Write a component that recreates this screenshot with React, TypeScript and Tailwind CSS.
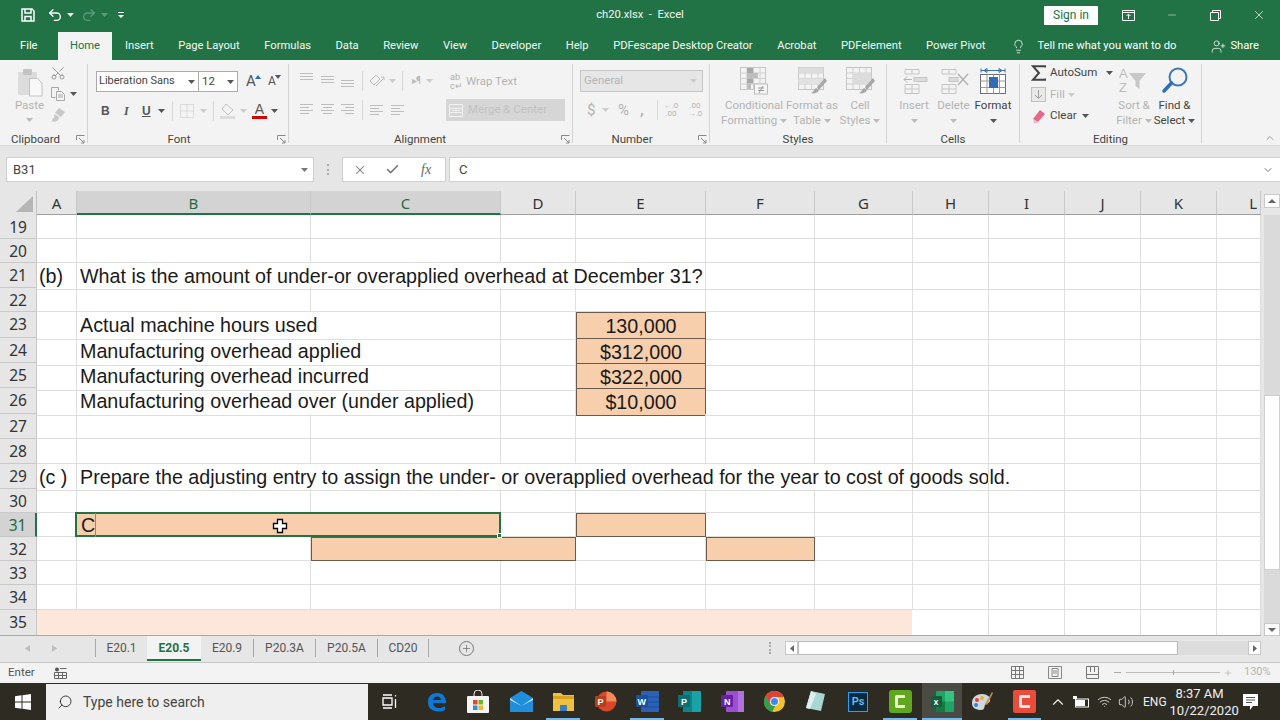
import React from 'react';
import {
  Scissors, Undo2, Redo2, Lightbulb, UserPlus, X, Check, Minus, Plus, Search,
  ChevronDown, ChevronUp, Wifi, Volume2,
} from 'lucide-react';

const ui = "font-['Roboto','Noto_Sans',sans-serif]";

function Caret({ c = '#555', className = '' }: { c?: string; className?: string }) {
  return (
    <svg width="7" height="4" viewBox="0 0 7 4" className={className}>
      <path d="M0 0h7L3.500 4z" fill={c} />
    </svg>
  );
}

function Launcher() {
  return (
    <svg width="9" height="9" viewBox="0 0 9 9" fill="none" stroke="#8a8a8a" strokeWidth="1">
      <path d="M.5 5V.5H8.500M3 3l5 5M8 5v3H5" />
    </svg>
  );
}

function Divider({ h = 'h-[24px]' }: { h?: string }) {
  return <div className={`w-px ${h} bg-[#d8d8d8]`} />;
}

function Lines({ kind }: { kind: 'l' | 'c' | 'r' | 't' | 'm' | 'b' }) {
  const rows: Record<string, number[][]> = {
    l: [[1, 14], [1, 10], [1, 14], [1, 10]],
    c: [[1, 14], [3, 12], [1, 14], [3, 12]],
    r: [[1, 14], [5, 14], [1, 14], [5, 14]],
    t: [[1, 14], [1, 14], [1, 14]],
    m: [[1, 14], [1, 14], [1, 14]],
    b: [[1, 14], [1, 14], [1, 14]],
  };
  const offs: Record<string, number> = { l: 2, c: 2, r: 2, t: 1, m: 4, b: 8 };
  return (
    <svg width="15" height="15" viewBox="0 0 15 15" stroke="#bdbdbd" strokeWidth="1">
      {rows[kind].map((r, i) => (
        <line key={i} x1={r[0]} x2={r[1]} y1={offs[kind] + i * 3 + 0.5} y2={offs[kind] + i * 3 + 0.5} />
      ))}
    </svg>
  );
}

function BigTableIcon({ kind }: { kind: 'cond' | 'table' | 'cell' }) {
  return (
    <svg width="30" height="28" viewBox="0 0 30 28" fill="none">
      <rect x="1.500" y=".5" width="25" height="22" fill="#f3f3f3" stroke="#c6c6c6" />
      <path d="M1.500 6h25M1.500 11.500h25M1.500 17h25M8 .5v22M14.500 .5v22M21 .5v22" stroke="#cfcfcf" />
      {kind === 'cond' && (
        <>
          <rect x="8" y="1" width="6" height="5" fill="#a8a8a8" />
          <rect x="8" y="6" width="11" height="5" fill="#bdbdbd" />
          <rect x="8" y="11.500" width="6" height="5" fill="#a8a8a8" />
          <rect x="8" y="17" width="4" height="5" fill="#bdbdbd" />
          <rect x="15.500" y="17" width="13" height="10" fill="#f7f7f7" stroke="#bdbdbd" />
          <path d="M19 21h6M19 23.500h6M24 19l-4 7" stroke="#9a9a9a" />
        </>
      )}
      {kind === 'table' && (
        <>
          <rect x="1.500" y=".5" width="25" height="5.500" fill="#dcdcdc" />
          <rect x="1.500" y="11.500" width="25" height="5.500" fill="#e2e2e2" />
          <path d="M28 11l-8 9 2 3 8-9zM19 21c-2 1-2 4-5 5 3 1 7 0 8-3z" fill="#a8a8a8" />
        </>
      )}
      {kind === 'cell' && (
        <>
          <rect x="8" y="6" width="18" height="11" fill="#dcdcdc" />
          <path d="M28 11l-8 9 2 3 8-9zM19 21c-2 1-2 4-5 5 3 1 7 0 8-3z" fill="#a8a8a8" />
        </>
      )}
    </svg>
  );
}

function BigCmd({ icon, l1, l2, w, caret, dark }: { icon: React.ReactNode; l1: string; l2?: string; w: string; caret?: boolean; dark?: boolean }) {
  const col = dark ? 'text-[#444]' : 'text-[#b4b4b4]';
  return (
    <div className={`${w} shrink-0 flex flex-col items-center`}>
      <div className="h-[28px] flex items-start justify-center">{icon}</div>
      <div className={`mt-[3px] text-[11.500px] leading-[15px] whitespace-nowrap ${col}`}>{l1}</div>
      {l2 ? (
        <div className={`text-[11.500px] leading-[15px] whitespace-nowrap flex items-center gap-[3px] ${col}`}>
          {l2}
          <Caret c={dark ? '#555' : '#bbb'} />
        </div>
      ) : (
        caret && (
          <div className="h-[15px] flex items-center">
            <Caret c={dark ? '#555' : '#bbb'} />
          </div>
        )
      )}
    </div>
  );
}

function Group({ w, label, labelPad, launcher, children }: { w: string; label: string; labelPad?: string; launcher?: boolean; children: React.ReactNode }) {
  return (
    <div className={`${w} shrink-0 h-[79px] mt-[4px] flex flex-col border-r border-[#d4d4d4]`}>
      <div className="flex-1 min-h-0">{children}</div>
      <div className="h-[16px] -mb-[4px] flex items-center">
        <div className={`flex-1 text-center text-[11.500px] leading-[16px] text-[#444] ${labelPad ?? ''}`}>{label}</div>
        {launcher && <div className="mr-[2px] flex"><Launcher /></div>}
      </div>
    </div>
  );
}

function Ribbon() {
  return (
    <div className={`h-[86px] bg-[#f3f3f3] flex ${ui} border-b border-[#d9d9d9]`}>
      <Group w="w-[88px]" label="Clipboard" labelPad="pr-[5px]" launcher>
        <div className="flex pl-[15px]">
          <div className="w-[29px] flex flex-col items-center">
            <svg width="28" height="30" viewBox="0 0 28 30" className="mt-[3px]">
              <rect x="2" y="5" width="19" height="23" rx="1" fill="#dcdcdc" />
              <rect x="7" y="2" width="9" height="6" rx="1" fill="#c4c4c4" />
              <path d="M13.500 11.500h8l4.500 4.500v13h-12.500z" fill="#f8f8f8" stroke="#c2c2c2" />
            </svg>
            <div className="mt-[1px] text-[11.500px] leading-[15px] text-[#b4b4b4]">Paste</div>
            <Caret c="#bbb" className="mt-[5px]" />
          </div>
          <div className="ml-[6px] flex flex-col gap-[5px] pt-[1px]">
            <Scissors size={16} color="#8d8d8d" strokeWidth={1.300} className="-rotate-90" />
            <div className="flex items-center gap-[4px]">
              <svg width="16" height="16" viewBox="0 0 16 16" fill="none" stroke="#a8a8a8">
                <path d="M1.500 1.500h7v3M1.500 1.500v10h4" />
                <path d="M6.500 5.500h5l3 3v6h-8z" fill="#f3f3f3" />
                <path d="M8 9h5M8 11h5" />
              </svg>
              <Caret />
            </div>
            <svg width="16" height="16" viewBox="0 0 16 16" fill="#c8c8c8">
              <path d="M9 1l6 4-4 5-6-4zM4.500 7l5 3.500-2 3-3 1.500-3.500-1 2-1-1-1 2-1z" />
            </svg>
          </div>
        </div>
      </Group>

      <Group w="w-[201px]" label="Font" labelPad="pr-[7px]" launcher>
        <div className="pl-[8px] pt-[7px]">
          <div className="flex items-center">
            <div className="w-[103px] h-[21px] bg-white border border-[#ababab] flex items-center justify-between pl-[2px] pr-[3px]">
              <span className="text-[11px] text-[#444] whitespace-nowrap">Liberation Sans</span>
              <Caret />
            </div>
            <div className="w-[40px] h-[21px] -ml-px bg-white border border-[#ababab] flex items-center justify-between pl-[3px] pr-[3px]">
              <span className="text-[11.500px] text-[#444]">12</span>
              <Caret />
            </div>
            <div className="ml-[8px] w-[20px] flex items-end text-[#555] text-[15px] leading-[15px]">
              <span>A</span>
              <svg width="6" height="4" viewBox="0 0 6 4" className="mb-[10px] -ml-[1px]"><path d="M0 4h6L3 0z" fill="#2b6cb0" /></svg>
            </div>
            <div className="ml-[2px] w-[20px] flex items-end text-[#555] text-[12px] leading-[13px]">
              <span>A</span>
              <svg width="6" height="4" viewBox="0 0 6 4" className="mb-[9px] -ml-[1px]"><path d="M0 0h6L3 4z" fill="#555" /></svg>
            </div>
          </div>
          <div className="flex items-center mt-[8px] h-[22px] pl-[5px] text-[#555] text-[12px]">
            <span className="w-[21px] font-bold font-['Liberation_Sans',sans-serif]">B</span>
            <span className="w-[20px] pl-[2px] italic font-['Liberation_Serif',serif] font-bold">I</span>
            <span className="w-[16px] underline font-bold font-['Liberation_Sans',sans-serif]">U</span>
            <Caret className="mr-[7px]" />
            <Divider h="h-[20px]" />
            <svg width="14" height="14" viewBox="0 0 14 14" fill="none" stroke="#c6c6c6" className="ml-[7px] mr-[6px]">
              <path d="M.5.5h13v13H.5zM7 .5v13M.5 7h13" strokeDasharray="1 1" />
            </svg>
            <Caret c="#ccc" className="mr-[6px]" />
            <Divider h="h-[20px]" />
            <svg width="20" height="18" viewBox="0 0 20 18" className="ml-[5px] mr-[1px]">
              <path d="M7 2l7 6-5 5-6-6z" fill="#f3f3f3" stroke="#c0c0c0" />
              <rect x="1" y="14" width="15" height="3" fill="#dcdcdc" />
            </svg>
            <Caret c="#ccc" className="mr-[5px]" />
            <div className="w-[15px] flex flex-col items-center">
              <span className="text-[14px] leading-[12px] text-[#555] font-['Liberation_Sans',sans-serif]">A</span>
              <div className="w-[15px] h-[3px] bg-[#d20000] mt-[1px]" />
            </div>
            <Caret className="ml-[4px]" />
          </div>
        </div>
      </Group>

      <Group w="w-[284px]" label="Alignment" labelPad="pr-[10px]" launcher>
        <div className="pt-[8px] pl-[10px] flex">
          <div className="w-[62px] flex flex-col gap-[15px]">
            <div className="flex gap-[5.500px]"><Lines kind="t" /><Lines kind="m" /><Lines kind="b" /></div>
            <div className="flex gap-[5.500px]"><Lines kind="l" /><Lines kind="c" /><Lines kind="r" /></div>
          </div>
          <div className="ml-[1px] w-[84px] flex flex-col gap-[11px]">
            <div className="flex items-center h-[18px] text-[#bbb]">
              <Divider h="h-[20px]" />
              <svg width="18" height="16" viewBox="0 0 18 16" fill="none" stroke="#bbb" className="ml-[5px] mr-[3px]">
                <path d="M2 8l6-6 4 4-6 6zM8 13l7-7M13 4h3v3" />
              </svg>
              <Caret c="#ccc" />
              <div className="w-[6px]" />
              <Divider h="h-[20px]" />
              <span className="ml-[9px] text-[10px] leading-[14px] tracking-[-1px]">▸¶</span>
              <Caret c="#ccc" className="ml-[6px]" />
            </div>
            <div className="flex items-center h-[18px]">
              <Divider h="h-[20px]" />
              <div className="ml-[6px]"><Lines kind="l" /></div>
              <div className="ml-[6px]"><Lines kind="l" /></div>
            </div>
          </div>
          <div className="w-[119px]">
            <div className="h-[20px] flex items-center pl-[4px] gap-[4px] text-[#b4b4b4]">
              <span className="text-[9px] leading-[9px] w-[12px] text-[#b0b0b0]">ab<br />c↵</span>
              <span className="text-[11.500px]">Wrap Text</span>
            </div>
            <div className="mt-[7px] h-[22px] bg-[#d6d6d6] flex items-center pl-[3px] gap-[5px]">
              <svg width="14" height="13" viewBox="0 0 14 13" fill="none" stroke="#f3f3f3"><path d="M.5.5h13v12H.5zM.5 4.500h13M.5 8.500h13M3 6.500h8" /></svg>
              <span className="text-[11.500px] text-[#c2c2c2]">Merge &amp; Center</span>
            </div>
          </div>
        </div>
      </Group>

      <Group w="w-[137px]" label="Number" labelPad="pr-[7px]" launcher>
        <div className="pl-[7px] pt-[6px]">
          <div className="w-[123px] h-[22px] bg-[#e6e6e6] border border-[#c6c6c6] flex items-center justify-between pl-[3px] pr-[5px] text-[11.500px] text-[#b4b4b4]">
            General
            <Caret c="#ccc" />
          </div>
          <div className="flex items-center mt-[8px] h-[20px] text-[#b4b4b4] pl-[7px]">
            <span className="text-[15px] w-[15px]">$</span>
            <Caret c="#ccc" className="mr-[9px]" />
            <span className="text-[15px] w-[19px]">%</span>
            <span className="text-[15px] font-bold w-[20px] pl-[3px]">,</span>
            <Divider h="h-[20px]" />
            <span className="ml-[1px] w-[24px] text-[8px] leading-[8px] text-center">←.0<br />.00</span>
            <span className="w-[24px] text-[8px] leading-[8px] text-center">.00<br />→.0</span>
          </div>
        </div>
      </Group>

      <Group w="w-[177px]" label="Styles">
        <div className="flex pt-[3px] pl-[13px]">
          <BigCmd w="w-[62px]" icon={<BigTableIcon kind="cond" />} l1="Conditional" l2="Formatting" />
          <BigCmd w="w-[54px]" icon={<BigTableIcon kind="table" />} l1="Format as" l2="Table" />
          <BigCmd w="w-[42px]" icon={<BigTableIcon kind="cell" />} l1="Cell" l2="Styles" />
        </div>
      </Group>

      <Group w="w-[133px]" label="Cells">
        <div className="flex pt-[3px] pl-[7px]">
          <BigCmd w="w-[40px]" caret l1="Insert" icon={
            <svg width="28" height="28" viewBox="0 0 28 28" fill="none" stroke="#c6c6c6">
              <path d="M5 2.500h14v4.500H5zM12 2.500v4.500M5 17.500h14v9H5zM5 22h14M12 17.500v9" />
              <rect x="14" y="10.500" width="13" height="4" fill="#dcdcdc" />
              <path d="M12 12.500H4M7 9.500l-3 3 3 3" stroke="#b4b4b4" />
            </svg>
          } />
          <BigCmd w="w-[39px]" caret l1="Delete" icon={
            <svg width="30" height="28" viewBox="0 0 30 28" fill="none" stroke="#c6c6c6">
              <path d="M3 2.500h14v4.500H3zM10 2.500v4.500M3 17.500h14v9H3zM3 22h14M10 17.500v9" />
              <rect x="10" y="10.500" width="9" height="4" fill="#dcdcdc" />
              <path d="M19 7l10 11M29 7L19 18" stroke="#b4b4b4" strokeWidth="1.500" />
            </svg>
          } />
          <BigCmd w="w-[40px]" caret dark l1="Format" icon={
            <svg width="28" height="30" viewBox="0 0 28 30" fill="none">
              <path d="M2 3.500h24M2 1.500v4M26 1.500v4M5 3.500l3-2v4zM23 3.500l-3-2v4z" stroke="#3c70b0" />
              <rect x="1.500" y="7.500" width="25" height="19" fill="#fff" stroke="#6e6e6e" />
              <path d="M1.500 14h25M1.500 20.500h25M8 7.500v19M14.500 7.500v19M20.500 7.500v19" stroke="#9a9a9a" />
              <rect x="10" y="10" width="9" height="11" fill="#2f6db5" />
            </svg>
          } />
        </div>
      </Group>

      <Group w="w-[182px]" label="Editing">
        <div className="flex pl-[11px]">
          <div className="w-[86px] shrink-0 flex flex-col gap-[3.500px]">
            <div className="flex items-center h-[18px] text-[#444] text-[11.500px]">
              <svg width="15" height="16" viewBox="0 0 15 16" fill="none" stroke="#444" strokeWidth="2" className="mr-[4px]">
                <path d="M14 2.500V1.200H2l6 6.800-6 6.800h12v-1.300" />
              </svg>
              <span className="whitespace-nowrap">AutoSum</span>
              <Caret className="ml-[9px]" />
            </div>
            <div className="flex items-center h-[18px] text-[#b4b4b4] text-[11.500px]">
              <svg width="15" height="15" viewBox="0 0 15 15" fill="#e8e8e8" stroke="#c0c0c0" className="mr-[4px]">
                <rect x=".5" y=".5" width="14" height="14" />
                <path d="M7.500 3v8M4 8l3.500 3.500L11 8" fill="none" stroke="#a0a0a0" />
              </svg>
              Fill
              <Caret c="#ccc" className="ml-[3px]" />
            </div>
            <div className="flex items-center h-[18px] text-[#444] text-[11.500px]">
              <svg width="15" height="14" viewBox="0 0 15 14" className="mr-[4px]">
                <path d="M9 1l5 4-7 8-5-3z" fill="#e36b89" />
                <path d="M2 10l5 3-1 1H3z" fill="#f4b5c6" />
              </svg>
              Clear
              <Caret className="ml-[5px]" />
            </div>
          </div>
          <div className="pt-[3px] flex">
            <BigCmd w="w-[34px]" l1="Sort &" l2="Filter" icon={
              <svg width="32" height="30" viewBox="0 0 32 30" className="mt-[-1px]" fill="#bcbcbc">
                <text x="1" y="12" fontSize="13" fontFamily="Liberation Sans">A</text>
                <text x="1" y="26" fontSize="13" fontFamily="Liberation Sans">Z</text>
                <path d="M11 7h17l-6.500 8v8l-4-3v-5z" fill="#c8c8c8" />
              </svg>
            } />
            <BigCmd w="w-[47px]" dark l1="Find &" l2="Select" icon={
              <svg width="28" height="30" viewBox="0 0 28 30" fill="none">
                <circle cx="17" cy="10" r="8.500" stroke="#3c78b8" strokeWidth="2" />
                <path d="M10.500 16L3 24" stroke="#2f6db5" strokeWidth="3.500" strokeLinecap="round" />
              </svg>
            } />
          </div>
        </div>
      </Group>
      <div className="flex-1 relative">
        <ChevronUp size={12} color="#9a9a9a" className="absolute right-[4px] bottom-[1px]" />
      </div>
    </div>
  );
}

function TopBars() {
  const tabs = ['Insert', 'Page Layout', 'Formulas', 'Data', 'Review', 'View', 'Developer', 'Help', 'PDFescape Desktop Creator', 'Acrobat', 'PDFelement', 'Power Pivot'];
  return (
    <div className={`bg-[#217346] text-white ${ui}`}>
      <div className="h-[30px] flex items-center relative">
        <div className="flex items-center pl-[21px] w-[200px]">
          <svg width="14" height="14" viewBox="0 0 14 14" fill="none" stroke="#fff" strokeWidth="1.500">
            <path d="M1 1h10l2 2v10H1z" />
            <path d="M4 1v4h6V1M4 13V8.500h6V13" />
          </svg>
          <Undo2 size={16} color="#fff" strokeWidth={2} className="ml-[12px]" />
          <Caret c="#e4efe9" className="ml-[4px]" />
          <Redo2 size={16} color="#5d9a7a" strokeWidth={2} className="ml-[7px]" />
          <Caret c="#5d9a7a" className="ml-[4px]" />
          <svg width="8" height="8" viewBox="0 0 8 8" fill="#fff" className="ml-[9px]"><path d="M1 1h6v1H1zM1 4h6L4 7z" /></svg>
        </div>
        <div className="flex-1 text-center text-[11.200px] whitespace-pre pr-[200px] text-[#f2f7f4]">ch20.xlsx  -  Excel</div>
        <div className="absolute right-0 top-0 h-[30px] flex items-center">
          <div className="w-[54px] h-[19px] bg-white text-[#217346] text-[12px] leading-[19px] text-center">Sign in</div>
          <svg width="13" height="11" viewBox="0 0 13 11" fill="none" stroke="#fff" className="ml-[24px]">
            <path d="M.5.5h12v10H.5zM.5 2.500h12M6.500 9V4.500M4.500 6l2-2 2 2" />
          </svg>
          <Minus size={12} color="#fff" strokeWidth={1} className="ml-[31px]" />
          <svg width="11" height="11" viewBox="0 0 11 11" fill="none" stroke="#fff" className="ml-[32px]">
            <path d="M.5 2.500h8v8h-8zM2.500 2.500v-2h8v8h-2" />
          </svg>
          <X size={14} color="#fff" strokeWidth={1.200} className="ml-[31px] mr-[14px]" />
        </div>
      </div>
      <div className="h-[30px] flex items-end text-[11.200px] leading-[28px] whitespace-nowrap">
        <div className="pl-[20px] w-[58px] shrink-0 h-[28px]">File</div>
        <div className="w-[54px] shrink-0 h-[28px] bg-[#f3f3f3] text-[#217346] text-center">Home</div>
        <div className="flex shrink-0 gap-[24.500px] pl-[13px] h-[28px]">
          {tabs.map((t) => <span key={t} className="text-[#f2f7f4]">{t}</span>)}
        </div>
        <div className="h-[28px] flex shrink-0 items-center ml-[26px]">
          <Lightbulb size={15} color="#fff" strokeWidth={1.200} />
          <span className="ml-[11px]">Tell me what you want to do</span>
          <UserPlus size={15} color="#fff" strokeWidth={1.200} className="ml-[35px]" />
          <span className="ml-[4px]">Share</span>
        </div>
      </div>
    </div>
  );
}

function FormulaBar() {
  return (
    <div className={`h-[45px] bg-[#e6e6e6] pt-[11px] pb-[9px] flex ${ui} text-[13px] text-[#444]`}>
      <div className="ml-[6px] w-[308px] bg-white border border-[#d0d0d0] flex items-center justify-between pl-[6px] pr-[5px]">
        B31
        <Caret c="#777" />
      </div>
      <div className="w-[28px] flex items-center justify-center">
        <div className="h-[11px] border-l-2 border-dotted border-[#aaa]" />
      </div>
      <div className="w-[104px] bg-white border border-[#d0d0d0] flex items-center pl-[10px] gap-[18px]">
        <X size={14} color="#777" strokeWidth={1.800} />
        <Check size={15} color="#777" strokeWidth={2.500} />
        <span className="ml-[3px] italic font-['Liberation_Serif',serif] text-[14px] text-[#666]">fx</span>
      </div>
      <div className="ml-[3px] flex-1 bg-white border border-[#d0d0d0] border-r-0 flex items-center justify-between pl-[9px] pr-[6px]">
        C
        <ChevronDown size={12} color="#777" strokeWidth={2} />
      </div>
    </div>
  );
}

const cols = [
  ['A', 'w-[40px]'], ['B', 'w-[234px]'], ['C', 'w-[190px]'], ['D', 'w-[75px]'], ['E', 'w-[130px]'], ['F', 'w-[109px]'],
  ['G', 'w-[98px]'], ['H', 'w-[76px]'], ['I', 'w-[76px]'], ['J', 'w-[76px]'], ['K', 'w-[76px]'], ['L', 'w-[44px]'],
];

function ColumnHeaders() {
  return (
    <div className="h-[24px] flex bg-[#e6e6e6] font-['Noto_Sans',sans-serif] text-[15px] text-[#333]">
      <div className="w-[37px] shrink-0 border-r border-[#c4c4c4] flex items-end justify-end pr-[3px] pb-[3px]">
        <svg width="17" height="16" viewBox="0 0 17 16"><path d="M17 0v16H0z" fill="#b6b6b6" /></svg>
      </div>
      {cols.map(([c, w]) => {
        const sel = c === 'B' || c === 'C';
        return (
          <div key={c} className={`${w} shrink-0 leading-[24px] border-r border-[#c8c8c8] ${c === 'L' ? 'text-right pr-[3px]' : 'text-center'} ${sel ? 'bg-[#d3d3d3] text-[#1f6b42] border-b-2 border-b-[#217346]' : 'border-b border-b-[#9f9f9f]'}`}>
            {c}
          </div>
        );
      })}
      <div className="flex-1 pl-[3px] pt-[3px]">
        <div className="h-[14px] bg-white border border-[#c8c8c8] flex items-center justify-center">
          <svg width="8" height="4" viewBox="0 0 8 4"><path d="M0 4h8L4 0z" fill="#666" /></svg>
        </div>
      </div>
    </div>
  );
}

type Cell = { from: number; to: number; text?: string; fill?: boolean; center?: boolean; box?: boolean };

const gridCols = 'grid-cols-[40px_234px_190px_75px_130px_109px_98px_76px_76px_76px_76px_44px]';

const orange = 'bg-[#f8cfac]';

const rowsData: { n: number; h: string; cells: Cell[] }[] = [
  { n: 19, h: 'h-[24px]', cells: [] },
  { n: 20, h: 'h-[24px]', cells: [] },
  { n: 21, h: 'h-[25px]', cells: [{ from: 1, to: 1, text: '(b)' }, { from: 2, to: 5, text: 'What is the amount of under-or overapplied overhead at December 31?' }] },
  { n: 22, h: 'h-[24px]', cells: [] },
  { n: 23, h: 'h-[26px]', cells: [{ from: 2, to: 3, text: 'Actual machine hours used' }, { from: 5, to: 5, text: '130,000', fill: true, center: true, box: true }] },
  { n: 24, h: 'h-[25px]', cells: [{ from: 2, to: 3, text: 'Manufacturing overhead applied' }, { from: 5, to: 5, text: '$312,000', fill: true, center: true, box: true }] },
  { n: 25, h: 'h-[25px]', cells: [{ from: 2, to: 3, text: 'Manufacturing overhead incurred' }, { from: 5, to: 5, text: '$322,000', fill: true, center: true, box: true }] },
  { n: 26, h: 'h-[26px]', cells: [{ from: 2, to: 3, text: 'Manufacturing overhead over (under applied)' }, { from: 5, to: 5, text: '$10,000', fill: true, center: true, box: true }] },
  { n: 27, h: 'h-[25px]', cells: [] },
  { n: 28, h: 'h-[25px]', cells: [] },
  { n: 29, h: 'h-[25px]', cells: [{ from: 1, to: 1, text: '(c )' }, { from: 2, to: 7, text: 'Prepare the adjusting entry to assign the under- or overapplied overhead for the year to cost of goods sold.' }] },
  { n: 30, h: 'h-[24px]', cells: [] },
  { n: 31, h: 'h-[24px]', cells: [{ from: 5, to: 5, fill: true, box: true }] },
  { n: 32, h: 'h-[24px]', cells: [{ from: 3, to: 4, fill: true, box: true }, { from: 6, to: 6, fill: true, box: true }] },
  { n: 33, h: 'h-[24px]', cells: [] },
  { n: 34, h: 'h-[25px]', cells: [] },
];

const spanClass: Record<number, string> = {
  1: 'col-span-1', 2: 'col-span-2', 3: 'col-span-3', 4: 'col-span-4', 5: 'col-span-5', 6: 'col-span-6',
};

function SheetRow({ n, h, cells }: { n: number; h: string; cells: Cell[] }) {
  const out: React.ReactNode[] = [];
  for (let c = 1; c <= 12; c++) {
    const cell = cells.find((x) => x.from === c);
    if (cell) {
      const span = cell.to - cell.from + 1;
      out.push(
        <div key={c} className={`${spanClass[span]} min-w-0 whitespace-nowrap ${c === 1 ? 'pl-[2px]' : 'pl-[3px]'} leading-[26px] text-[#1a1a1a] ${cell.fill ? orange : ''} ${cell.center ? 'text-center pr-[3px]' : ''} ${cell.box ? 'border border-[#6b5a4b]' : 'border-r border-b border-[#dedede]'}`}>
          {cell.text}
        </div>
      );
      c = cell.to;
    } else {
      out.push(<div key={c} className="border-r border-b border-[#dedede]" />);
    }
  }
  const selected = n === 31;
  return (
    <div className={`flex ${h}`}>
      <div className={`w-[37px] shrink-0 text-center font-['Noto_Sans',sans-serif] text-[15.500px] leading-[24px] border-r border-b ${selected ? 'bg-[#d3d3d3] text-[#1f6b42] border-r-2 border-r-[#217346] border-b-[#c4c4c4]' : 'bg-[#e6e6e6] text-[#333] border-[#c8c8c8]'}`}>
        {n}
      </div>
      <div className={`grid ${gridCols} relative`}>
        {out}
        {selected && (
          <div className="absolute left-[38px] top-[-1px] w-[426px] h-[25px] bg-[#f8cfac] border-2 border-[#217346] flex items-center z-10">
            <span className="pl-[4px] leading-[23px] pt-[1px] border-r border-[#8a8a8a] text-[#1a1a1a]">C</span>
            <div className="absolute right-[-3px] bottom-[-3px] w-[5px] h-[5px] bg-[#217346] border border-white" />
            <svg width="16" height="16" viewBox="0 0 16 16" className="absolute left-[195px] top-[4px]">
              <path d="M5.500 1.500h5v4h4v5h-4v4h-5v-4h-4v-5h4z" fill="#fff" stroke="#000" strokeWidth="1.300" />
            </svg>
          </div>
        )}
      </div>
    </div>
  );
}

function Sheet() {
  return (
    <div className="flex h-[421px] bg-white">
      <div className="w-[1261px] shrink-0 font-['Liberation_Sans',Arial,sans-serif] text-[19.700px] border-r border-[#a8a8a8]">
        {rowsData.map((r) => <SheetRow key={r.n} {...r} />)}
        <div className="flex h-[26px] border-b border-[#a8a8a8]">
          <div className="w-[37px] shrink-0 text-center bg-[#e6e6e6] font-['Noto_Sans',sans-serif] text-[15.500px] leading-[24px] text-[#333] border-r border-[#c8c8c8]">35</div>
          <div className="w-[875px] shrink-0 bg-[#fde6da]" />
          <div className="grid grid-cols-[77px_76px_76px_76px_44px] flex-1">
            {[0, 1, 2, 3, 4].map((i) => <div key={i} className="border-r border-[#dedede]" />)}
          </div>
        </div>
      </div>
      <div className="flex-1 bg-[#e6e6e6] pl-[3px] flex">
        <div className="flex-1 flex flex-col">
          <div className="h-[180px] bg-[#dadada]" />
          <div className="h-[175px] bg-white border border-[#cfcfcf]" />
          <div className="h-[53px] bg-[#dadada]" />
          <div className="h-[13px] bg-white border border-[#c8c8c8] flex items-center justify-center">
            <svg width="8" height="4" viewBox="0 0 8 4"><path d="M0 0h8L4 4z" fill="#666" /></svg>
          </div>
        </div>
      </div>
    </div>
  );
}

function SheetTabs() {
  const Sep = () => <div className="w-px h-[18px] bg-[#a8a8a8]" />;
  const Tab = ({ t, w }: { t: string; w: string }) => <div className={`${w} text-center`}>{t}</div>;
  return (
    <div className={`h-[27px] pb-[2px] bg-[#e6e6e6] border-b border-[#c8c8c8] flex items-center ${ui} text-[12px] text-[#555] whitespace-nowrap`}>
      <div className="w-[95px] flex items-center pl-[25px] gap-[22px]">
        <svg width="5" height="7" viewBox="0 0 5 7"><path d="M5 0v7L0 3.500z" fill="#bdbdbd" /></svg>
        <svg width="5" height="7" viewBox="0 0 5 7"><path d="M0 0v7l5-3.500z" fill="#bdbdbd" /></svg>
      </div>
      <Sep />
      <Tab t="E20.1" w="w-[51px]" />
      <div className="w-[54px] h-[25px] bg-[#f3f3f3] border-b-2 border-[#217346] text-[#217346] font-bold text-center leading-[24px]">E20.5</div>
      <Tab t="E20.9" w="w-[52px]" />
      <Sep />
      <Tab t="P20.3A" w="w-[61px]" />
      <Sep />
      <Tab t="P20.5A" w="w-[61px]" />
      <Sep />
      <Tab t="CD20" w="w-[50px]" />
      <Sep />
      <div className="ml-[30px] w-[15px] h-[15px] rounded-full border border-[#777] flex items-center justify-center">
        <Plus size={11} color="#666" strokeWidth={1.500} />
      </div>
      <div className="ml-[295px] h-[12px] border-l-2 border-dotted border-[#aaa]" />
      <div className="ml-[14px] w-[13px] h-[14px] bg-white border border-[#c8c8c8] flex items-center justify-center">
        <svg width="4" height="7" viewBox="0 0 4 7"><path d="M4 0v7L0 3.500z" fill="#666" /></svg>
      </div>
      <div className="w-[380px] h-[14px] bg-white border border-[#bbb]" />
      <div className="w-[70px] h-[14px] bg-[#dcdcdc]" />
      <div className="w-[13px] h-[14px] bg-white border border-[#c8c8c8] flex items-center justify-center">
        <svg width="4" height="7" viewBox="0 0 4 7"><path d="M0 0v7l4-3.500z" fill="#666" /></svg>
      </div>
    </div>
  );
}

function StatusBar() {
  return (
    <div className={`h-[20px] pb-[1px] bg-[#f3f3f3] flex items-center ${ui} text-[11.500px] text-[#555]`}>
      <span className="ml-[8px] w-[25px]">Enter</span>
      <svg width="13" height="12" viewBox="0 0 13 12" className="ml-[21px]" fill="none" stroke="#666">
        <circle cx="3" cy="2.500" r="2" fill="#555" stroke="none" />
        <path d="M6 1.500h6.500M.5 5.500h12v6H.5zM.5 8.500h12M4.500 5.500v6M8.500 5.500v6" />
      </svg>
      <svg width="13" height="13" viewBox="0 0 13 13" className="ml-[944px]" fill="none" stroke="#777">
        <path d="M.5.5h12v12H.5zM.5 4.500h12M.5 8.500h12M4.500.5v12M8.500.5v12" />
      </svg>
      <svg width="14" height="13" viewBox="0 0 14 13" className="ml-[24px]" fill="none" stroke="#888">
        <path d="M.5.5h13v12H.5zM4 2.500h6v8H4zM5 5h4M5 7h4" />
      </svg>
      <svg width="13" height="13" viewBox="0 0 13 13" className="ml-[24px]" fill="none" stroke="#777">
        <path d="M.5.5h12v12H.5zM.5 8.500h12M4.500.5v5.500M8.500.5v5.500" />
      </svg>
      <div className="ml-[15px] w-[7px] h-px bg-[#aaa]" />
      <div className="ml-[5px] w-[94px] h-px bg-[#bbb] relative">
        <div className="absolute left-[47px] top-[-2px] w-px h-[5px] bg-[#aaa]" />
      </div>
      <Plus size={10} color="#aaa" strokeWidth={1.300} className="ml-[3px]" />
      <span className="ml-[11px] text-[#b4b4b4] text-[11px]">130%</span>
    </div>
  );
}

function TbIcon({ children, ml }: { children: React.ReactNode; ml: string }) {
  return <div className={`${ml} w-[24px] h-[24px] shrink-0 flex items-center justify-center`}>{children}</div>;
}

function Taskbar() {
  return (
    <div className={`h-[37px] bg-[#2e2b22] flex items-center relative ${ui}`}>
      <div className="w-[46px] flex justify-center">
        <svg width="16" height="16" viewBox="0 0 16 16" fill="#fff"><path d="M0 2.300l6.500-1v6.200H0zM7.500 1.200L16 0v7.500H7.500zM0 8.500h6.500v6.200l-6.500-1zM7.500 8.500H16V16l-8.500-1.200z" /></svg>
      </div>
      <div className="w-[322px] h-[36px] mt-[1px] bg-[#efefef] flex items-center pl-[11px] text-[14px] text-[#444]">
        <Search size={16} color="#222" strokeWidth={1.300} className="-scale-x-100" />
        <span className="ml-[10px]">Type here to search</span>
      </div>
      <TbIcon ml="ml-[10px]">
        <svg width="16" height="15" viewBox="0 0 16 15" fill="none" stroke="#fff" strokeWidth="1.300">
          <path d="M1 1h9M1 14h9M1 4h9v7H1zM13.500 1v1.500M13.500 5v9" />
        </svg>
      </TbIcon>
      <TbIcon ml="ml-[23px]">
        <svg width="20" height="20" viewBox="0 0 20 20"><path d="M1 10C1 4 5 1 10 1c6 0 9 4 9 10H6c0 3 3 5 6 5 2 0 4-.500 6-2v4c-2 1-4 1.500-7 1.500C5 19.500 1 16 1 10zm5-2h8c0-2-2-3.500-4-3.500S6.500 6 6 8z" fill="#0f78d4" /></svg>
      </TbIcon>
      <TbIcon ml="ml-[17px]">
        <svg width="22" height="23" viewBox="0 0 22 23">
          <path d="M7 6V4a4 4 0 018 0v2" fill="none" stroke="#eee" />
          <rect x="0" y="6" width="22" height="17" rx="1" fill="#f4f4f4" />
          <rect x="6" y="10" width="4.500" height="4.500" fill="#e8452c" /><rect x="11.500" y="10" width="4.500" height="4.500" fill="#6fb52c" />
          <rect x="6" y="15.500" width="4.500" height="4.500" fill="#1b9be0" /><rect x="11.500" y="15.500" width="4.500" height="4.500" fill="#f5b81c" />
        </svg>
      </TbIcon>
      <TbIcon ml="ml-[19px]">
        <svg width="23" height="21" viewBox="0 0 23 21"><path d="M0 7l11.500-7L23 7v14H0z" fill="#1f8fdc" /><path d="M0 7l11.500 8L23 7v2l-11.500 6L0 9z" fill="#bfe3f8" /></svg>
      </TbIcon>
      <TbIcon ml="ml-[18px]">
        <svg width="21" height="19" viewBox="0 0 21 19"><path d="M0 1h8l2 2h11v16H0z" fill="#f0c040" /><rect x="0" y="4" width="21" height="3" fill="#d9a520" /><rect x="7" y="13" width="7" height="6" fill="#3a7fc2" /></svg>
      </TbIcon>
      <TbIcon ml="ml-[18px]">
        <svg width="23" height="21" viewBox="0 0 23 21"><circle cx="12.500" cy="10.500" r="10" fill="#d9472b" /><path d="M12.500 .5a10 10 0 0110 10h-10z" fill="#ee8a5c" /><rect x="1" y="5" width="11" height="11" rx="1" fill="#b83c1e" /><text x="3.500" y="14" fontSize="9" fontWeight="700" fill="#fff" fontFamily="Liberation Sans">P</text></svg>
      </TbIcon>
      <TbIcon ml="ml-[18px]">
        <svg width="23" height="21" viewBox="0 0 23 21"><rect x="5" y="0" width="18" height="21" rx="1" fill="#2b62b8" /><path d="M5 6h18M5 11h18M5 16h18" stroke="#1a4a96" /><rect x="0" y="4" width="12" height="12" rx="1" fill="#1c4f9e" /><text x="1.500" y="13.500" fontSize="9" fontWeight="700" fill="#fff" fontFamily="Liberation Sans">W</text></svg>
      </TbIcon>
      <TbIcon ml="ml-[18px]">
        <svg width="23" height="21" viewBox="0 0 23 21"><rect x="5" y="0" width="18" height="21" rx="1" fill="#17a3a8" /><rect x="5" y="0" width="9" height="21" fill="#0e8488" /><rect x="0" y="4" width="12" height="12" rx="1" fill="#0b6f74" /><text x="3" y="13.500" fontSize="9" fontWeight="700" fill="#fff" fontFamily="Liberation Sans">P</text></svg>
      </TbIcon>
      <TbIcon ml="ml-[19px]">
        <svg width="23" height="21" viewBox="0 0 23 21"><rect x="5" y="0" width="18" height="21" rx="1" fill="#9c4fd0" /><path d="M17 0h6v21h-6z" fill="#b070e0" /><rect x="0" y="4" width="12" height="12" rx="1" fill="#6a1fa8" /><text x="3" y="13.500" fontSize="9" fontWeight="700" fill="#fff" fontFamily="Liberation Sans">N</text></svg>
      </TbIcon>
      <TbIcon ml="ml-[18px]">
        <svg width="21" height="21" viewBox="0 0 21 21"><circle cx="10.500" cy="10.500" r="10.500" fill="#f6c324" /><path d="M10.500 0A10.500 10.500 0 001.500 5l5 9 4-8h9.500A10.500 10.500 0 0010.500 0z" fill="#dc4437" /><path d="M1.500 5A10.500 10.500 0 008 20.700l5-8.700-6.500 2z" fill="#2e9e4f" /><circle cx="10.500" cy="10.500" r="4.500" fill="#fff" /><circle cx="10.500" cy="10.500" r="3.500" fill="#3f86f0" /></svg>
      </TbIcon>
      <TbIcon ml="ml-[17px]">
        <svg width="21" height="21" viewBox="0 0 21 21"><path d="M6 0l14 3-4 17-15-3z" fill="#a8d6d0" /><path d="M6 0l5 3-6 15-4-1z" fill="#dff0ec" /></svg>
      </TbIcon>
      <TbIcon ml="ml-[19px]">
        <div className="w-[20px] h-[20px] bg-[#0b2a40] border border-[#2aa0e8] text-[#5ec0f4] text-[11px] leading-[18px] text-center font-semibold">Ps</div>
      </TbIcon>
      <TbIcon ml="ml-[18px]">
        <svg width="23" height="23" viewBox="0 0 23 23"><rect width="23" height="23" rx="3" fill="#5fa81e" /><path d="M16 5H7.500Q6 5 6 7v9q0 2 1.500 2H16v-3H9V8h7z" fill="#e8f6d0" /></svg>
      </TbIcon>
      <div className="ml-[10px] w-[40px] h-[37px] bg-[#4b4b45] flex items-center justify-center shrink-0">
        <svg width="23" height="21" viewBox="0 0 23 21"><rect x="5" y="0" width="18" height="21" rx="1" fill="#21a366" /><rect x="14" y="0" width="9" height="10.500" fill="#33c481" /><rect x="5" y="10.500" width="9" height="10.500" fill="#107c41" /><rect x="0" y="5" width="11" height="11" rx="1" fill="#185c37" /><text x="2.500" y="14" fontSize="9" fontWeight="700" fill="#fff" fontFamily="Liberation Sans">x</text></svg>
      </div>
      <TbIcon ml="ml-[8px]">
        <svg width="23" height="23" viewBox="0 0 23 23"><path d="M1 13C1 7 6 4 11 4c5 0 9 3 8 7-1 3-4 2-5 4s0 5-4 5C5 20 1 18 1 13z" fill="#cfd8dc" /><circle cx="6" cy="10" r="2" fill="#e04040" /><circle cx="11" cy="8" r="2" fill="#f0b020" /><circle cx="5" cy="15" r="2" fill="#3080e0" /><path d="M14 14l7-12 1 1-6 12z" fill="#c89050" /></svg>
      </TbIcon>
      <TbIcon ml="ml-[18px]">
        <svg width="23" height="23" viewBox="0 0 23 23"><rect width="23" height="23" rx="2" fill="#ea4c3c" /><path d="M17 5H8Q6 5 6 7v9q0 2 2 2h9v-3H9V8h8z" fill="#fbe5e0" /></svg>
      </TbIcon>
      <ChevronUp size={18} color="#eee" strokeWidth={1.500} className="ml-[13px]" />
      <svg width="16" height="12" viewBox="0 0 16 12" className="ml-[6px]">
        <rect x="2.500" y="3" width="13" height="8" fill="#2e2b22" stroke="#fff" /><rect x="3" y="4" width="9" height="6" fill="#fff" />
        <rect x="0" y="0" width="4" height="3" fill="#fff" />
      </svg>
      <Wifi size={15} color="#eee" strokeWidth={1.300} className="ml-[8px]" />
      <Volume2 size={16} color="#eee" strokeWidth={1.200} className="ml-[6px]" />
      <span className="ml-[9px] text-[12px] text-[#f0f0f0]">ENG</span>
      <div className="ml-[3px] w-[60px] text-center text-[13px] leading-[17px] text-[#f0f0f0] whitespace-nowrap">
        8:37 AM<br />10/22/2020
      </div>
      <svg width="15" height="16" viewBox="0 0 15 16" className="ml-[13px]">
        <path d="M0 0h15v12h-5l-3 4v-4H0z" fill="#fff" />
        <path d="M3 3.500h9M3 6h9M3 8.500h6" stroke="#555" strokeWidth="1" />
      </svg>
      {[
        ['left-[546px]', 'w-[34px]'], ['left-[630px]', 'w-[34px]'], ['left-[883px]', 'w-[34px]'], ['left-[922px]', 'w-[40px]'], ['left-[1008px]', 'w-[33px]'],
      ].map(([l, w]) => <div key={l} className={`absolute bottom-0 h-[2px] bg-[#76b9ed] ${l} ${w}`} />)}
    </div>
  );
}

export default function App() {
  return (
    <div className="w-[1280px] h-[720px] overflow-hidden bg-white">
      <TopBars />
      <Ribbon />
      <FormulaBar />
      <ColumnHeaders />
      <Sheet />
      <SheetTabs />
      <StatusBar />
      <Taskbar />
    </div>
  );
}
